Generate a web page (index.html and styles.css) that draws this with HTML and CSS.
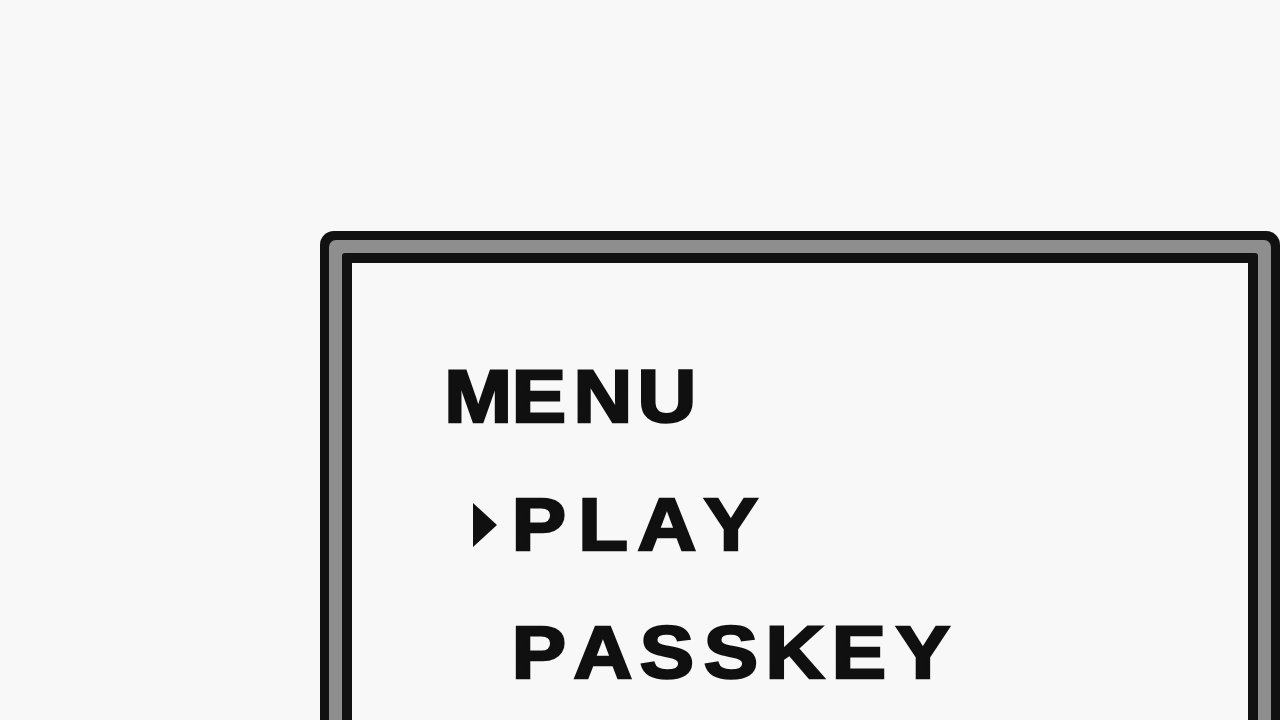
FILE: index.html
```html
<!DOCTYPE html>
<html lang="en">
<head>
<meta charset="utf-8">
<title>Menu</title>
<link rel="stylesheet" href="styles.css">
</head>
<body>
<div class="frame">
  <div class="frame-mid">
    <div class="frame-in">
      <div class="panel">
        <div class="row"><span class="ch">M</span><span class="ch">E</span><span class="ch">N</span><span class="ch">U</span></div>
        <div class="row item selected"><span class="cursor"><svg width="28" height="46" viewBox="0 0 28 46"><polygon points="2,1 26,23 2,45" fill="#101010"/></svg></span><span class="ch">P</span><span class="ch">L</span><span class="ch">A</span><span class="ch">Y</span></div>
        <div class="row item"><span class="cursor"></span><span class="ch">P</span><span class="ch">A</span><span class="ch">S</span><span class="ch">S</span><span class="ch">K</span><span class="ch">E</span><span class="ch">Y</span></div>
      </div>
    </div>
  </div>
</div>
</body>
</html>
```
FILE: styles.css
```css
html, body {
  margin: 0;
  height: 100%;
  overflow: hidden;
  background: #f8f8f8;
}
body {
  padding: 231px 0 0 320px;
  box-sizing: border-box;
}
.frame {
  width: 960px;
  height: 560px;
  box-sizing: border-box;
  background: #111111;
  border-radius: 14px;
  padding: 9px;
}
.frame-mid {
  height: 100%;
  box-sizing: border-box;
  background: #8e8e8e;
  border-radius: 7px;
  padding: 13px;
}
.frame-in {
  height: 100%;
  box-sizing: border-box;
  background: #111111;
  border-radius: 3px;
  padding: 10px;
}
.panel {
  height: 100%;
  box-sizing: border-box;
  background: #f8f8f8;
  padding: 70px 0 0 95px;
  display: flex;
  flex-direction: column;
  font-family: "Liberation Sans", Arial, sans-serif;
  font-weight: bold;
  font-size: 74px;
  color: #101010;
  -webkit-text-stroke: 2.5px #101010;
}
.row {
  display: flex;
  height: 128px;
  line-height: 128px;
}
.ch {
  display: inline-block;
  width: 56px;
  margin-right: 8px;
  text-align: center;
  transform: scaleX(1.1);
}
.cursor {
  width: 64px;
  display: flex;
  align-items: center;
  padding-left: 24px;
  box-sizing: border-box;
}
.cursor svg {
  display: block;
}
```
